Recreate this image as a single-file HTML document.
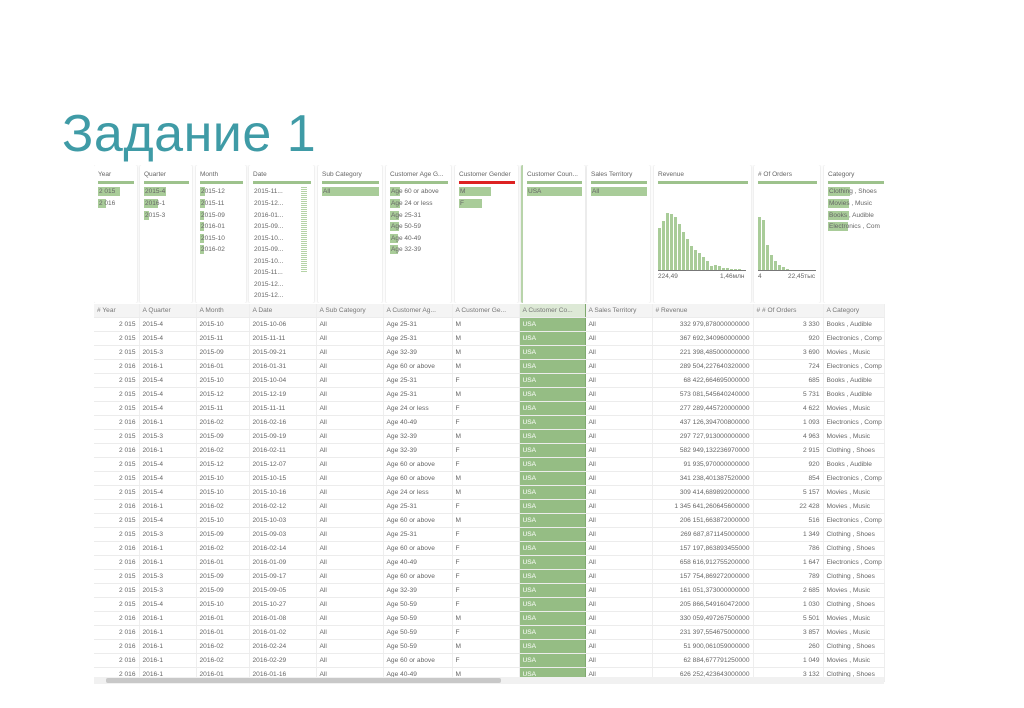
<!DOCTYPE html>
<html><head><meta charset="utf-8">
<style>
body{margin:0;width:1024px;height:708px;background:#fff;position:relative;overflow:hidden;font-family:"Liberation Sans",sans-serif;color:#666}
h1{position:absolute;left:62px;top:104px;margin:0;font-weight:normal;font-size:52px;color:#3f9ba6;font-family:"Liberation Sans","DejaVu Sans",sans-serif;letter-spacing:0.5px}
.cards{position:absolute;left:94px;top:165px;height:138px;width:790px;overflow:hidden}
.card{position:absolute;top:0;height:138px;background:#fff;box-shadow:0 0 2px rgba(0,0,0,.18);border-radius:2px;font-size:6.5px;overflow:hidden}
.card .t{position:absolute;left:4px;top:6px;white-space:nowrap}
.card .b{position:absolute;left:4px;right:3px;top:16px;height:3px;background:#9dc28c}
.card .v{position:absolute;left:4px;white-space:nowrap;height:9px;line-height:9px;font-size:6.5px}
.card .v i{position:absolute;left:0;top:0;height:9px;background:#a9cc99;z-index:0}
.card .v span{position:relative;z-index:1;padding-left:1px}
table{position:absolute;left:94px;top:304px;border-collapse:collapse;table-layout:fixed;width:790px;font-size:6.6px}
td{height:13px;padding:0 3px;border-bottom:1px solid #ececec;border-right:1px solid #eee;white-space:nowrap;overflow:hidden}
tr.h td{height:13px;background:#f4f4f4;color:#777}
td.r{text-align:right}
td.g{background:#95bd84;color:#fff;border-right:1px solid #7fa86f}
tr.h td.g{background:#dde9d6;color:#777}
.sb{position:absolute;left:94px;top:677px;width:790px;height:7px;background:#f1f1f1}
.sb i{position:absolute;left:12px;top:1px;width:395px;height:5px;background:#c8c8c8;border-radius:2px}
</style></head><body>
<h1>Задание 1</h1>
<div class="cards">
<div class="card" style="left:0;width:43px"><div class="t">Year</div><div class="b"></div>
<div class="v" style="top:22px"><i style="width:22px"></i><span>2 015</span></div>
<div class="v" style="top:34px"><i style="width:8px"></i><span>2 016</span></div></div>
<div class="card" style="left:46px;width:52px"><div class="t">Quarter</div><div class="b"></div>
<div class="v" style="top:22px"><i style="width:22px"></i><span>2015-4</span></div>
<div class="v" style="top:34px"><i style="width:14px"></i><span>2016-1</span></div>
<div class="v" style="top:46px"><i style="width:5px"></i><span>2015-3</span></div></div>
<div class="card" style="left:102px;width:50px"><div class="t">Month</div><div class="b"></div>
<div class="v" style="top:22px"><i style="width:5px"></i><span>2015-12</span></div>
<div class="v" style="top:34px"><i style="width:5px"></i><span>2015-11</span></div>
<div class="v" style="top:46px"><i style="width:4px"></i><span>2015-09</span></div>
<div class="v" style="top:57px"><i style="width:4px"></i><span>2016-01</span></div>
<div class="v" style="top:69px"><i style="width:4px"></i><span>2015-10</span></div>
<div class="v" style="top:80px"><i style="width:4px"></i><span>2016-02</span></div></div>
<div class="card" style="left:155px;width:65px"><div class="t">Date</div><div class="b"></div>
<div style="position:absolute;left:52px;top:22px;width:6px;height:85px;background:repeating-linear-gradient(#b5d3a6 0 1px,#fff 1px 2px)"></div>
<div class="v" style="top:22px"><span>2015-11...</span></div>
<div class="v" style="top:34px"><span>2015-12...</span></div>
<div class="v" style="top:46px"><span>2016-01...</span></div>
<div class="v" style="top:57px"><span>2015-09...</span></div>
<div class="v" style="top:69px"><span>2015-10...</span></div>
<div class="v" style="top:80px"><span>2015-09...</span></div>
<div class="v" style="top:92px"><span>2015-10...</span></div>
<div class="v" style="top:103px"><span>2015-11...</span></div>
<div class="v" style="top:115px"><span>2015-12...</span></div>
<div class="v" style="top:126px"><span>2015-12...</span></div></div>
<div class="card" style="left:224px;width:64px"><div class="t">Sub Category</div><div class="b"></div>
<div class="v" style="top:22px;right:3px"><i style="width:100%"></i><span>All</span></div></div>
<div class="card" style="left:292px;width:65px"><div class="t">Customer Age G...</div><div class="b"></div>
<div class="v" style="top:22px"><i style="width:10px"></i><span>Age 60 or above</span></div>
<div class="v" style="top:34px"><i style="width:10px"></i><span>Age 24 or less</span></div>
<div class="v" style="top:46px"><i style="width:9px"></i><span>Age 25-31</span></div>
<div class="v" style="top:57px"><i style="width:9px"></i><span>Age 50-59</span></div>
<div class="v" style="top:69px"><i style="width:8px"></i><span>Age 40-49</span></div>
<div class="v" style="top:80px"><i style="width:8px"></i><span>Age 32-39</span></div></div>
<div class="card" style="left:361px;width:63px"><div class="t">Customer Gender</div><div class="b" style="background:#d22"></div>
<div class="v" style="top:22px"><i style="width:32px"></i><span>M</span></div>
<div class="v" style="top:34px"><i style="width:23px"></i><span>F</span></div></div>
<div class="card" style="left:427px;width:62px;border-left:2px solid #b8d4aa"><div class="t">Customer Coun...</div><div class="b"></div>
<div class="v" style="top:22px;right:3px"><i style="width:100%"></i><span>USA</span></div></div>
<div class="card" style="left:493px;width:63px"><div class="t">Sales Territory</div><div class="b"></div>
<div class="v" style="top:22px;right:3px"><i style="width:100%"></i><span>All</span></div></div>
<div class="card" style="left:560px;width:97px"><div class="t">Revenue</div><div class="b"></div>
<svg style="position:absolute;left:3px;top:40px" width="92" height="66"><g fill="#a9cc99">
<rect x="1" y="23" width="3" height="43"/><rect x="5" y="16" width="3" height="50"/><rect x="9" y="8" width="3" height="58"/><rect x="13" y="9" width="3" height="57"/><rect x="17" y="12" width="3" height="54"/><rect x="21" y="19" width="3" height="47"/><rect x="25" y="27" width="3" height="39"/><rect x="29" y="34" width="3" height="32"/><rect x="33" y="41" width="3" height="25"/><rect x="37" y="45" width="3" height="21"/><rect x="41" y="48" width="3" height="18"/><rect x="45" y="52" width="3" height="14"/><rect x="49" y="56" width="3" height="10"/><rect x="53" y="61" width="3" height="5"/><rect x="57" y="60" width="3" height="6"/><rect x="61" y="61" width="3" height="5"/><rect x="65" y="63" width="3" height="3"/><rect x="69" y="63" width="3" height="3"/><rect x="73" y="64" width="3" height="2"/><rect x="77" y="64" width="3" height="2"/><rect x="81" y="64" width="3" height="2"/><rect x="85" y="65" width="3" height="1"/></g>
<rect x="1" y="65" width="88" height="1" fill="#777"/></svg>
<div class="v" style="top:107px">224,49</div><div class="v" style="top:107px;left:66px">1,46млн</div></div>
<div class="card" style="left:660px;width:66px"><div class="t"># Of Orders</div><div class="b"></div>
<svg style="position:absolute;left:3px;top:40px" width="60" height="66"><g fill="#a9cc99">
<rect x="1" y="12" width="3" height="54"/><rect x="5" y="15" width="3" height="51"/><rect x="9" y="40" width="3" height="26"/><rect x="13" y="50" width="3" height="16"/><rect x="17" y="56" width="3" height="10"/><rect x="21" y="60" width="3" height="6"/><rect x="25" y="62" width="3" height="4"/><rect x="29" y="64" width="3" height="2"/><rect x="33" y="65" width="3" height="1"/></g>
<rect x="1" y="65" width="58" height="1" fill="#777"/></svg>
<div class="v" style="top:107px">4</div><div class="v" style="top:107px;left:34px">22,45тыс</div></div>
<div class="card" style="left:730px;width:66px"><div class="t">Category</div><div class="b"></div>
<div class="v" style="top:22px"><i style="width:22px"></i><span>Clothing , Shoes</span></div>
<div class="v" style="top:34px"><i style="width:21px"></i><span>Movies , Music</span></div>
<div class="v" style="top:46px"><i style="width:21px"></i><span>Books , Audible</span></div>
<div class="v" style="top:57px"><i style="width:20px"></i><span>Electronics , Com</span></div></div>
</div>
<table>
<colgroup><col style="width:45px"><col style="width:57px"><col style="width:53px"><col style="width:67px"><col style="width:67px"><col style="width:69px"><col style="width:67px"><col style="width:66px"><col style="width:67px"><col style="width:101px"><col style="width:70px"><col style="width:61px"></colgroup>
<tr class="h"><td># Year</td><td>A Quarter</td><td>A Month</td><td>A Date</td><td>A Sub Category</td><td>A Customer Ag...</td><td>A Customer Ge...</td><td class="g">A Customer Co...</td><td>A Sales Territory</td><td># Revenue</td><td># # Of Orders</td><td>A Category</td></tr>
<tr><td class="r">2 015</td><td>2015-4</td><td>2015-10</td><td>2015-10-06</td><td>All</td><td>Age 25-31</td><td>M</td><td class="g">USA</td><td>All</td><td class="r">332 979,878000000000</td><td class="r">3 330</td><td>Books , Audible</td></tr>
<tr><td class="r">2 015</td><td>2015-4</td><td>2015-11</td><td>2015-11-11</td><td>All</td><td>Age 25-31</td><td>M</td><td class="g">USA</td><td>All</td><td class="r">367 692,340960000000</td><td class="r">920</td><td>Electronics , Comp</td></tr>
<tr><td class="r">2 015</td><td>2015-3</td><td>2015-09</td><td>2015-09-21</td><td>All</td><td>Age 32-39</td><td>M</td><td class="g">USA</td><td>All</td><td class="r">221 398,485000000000</td><td class="r">3 690</td><td>Movies , Music</td></tr>
<tr><td class="r">2 016</td><td>2016-1</td><td>2016-01</td><td>2016-01-31</td><td>All</td><td>Age 60 or above</td><td>M</td><td class="g">USA</td><td>All</td><td class="r">289 504,227640320000</td><td class="r">724</td><td>Electronics , Comp</td></tr>
<tr><td class="r">2 015</td><td>2015-4</td><td>2015-10</td><td>2015-10-04</td><td>All</td><td>Age 25-31</td><td>F</td><td class="g">USA</td><td>All</td><td class="r">68 422,664695000000</td><td class="r">685</td><td>Books , Audible</td></tr>
<tr><td class="r">2 015</td><td>2015-4</td><td>2015-12</td><td>2015-12-19</td><td>All</td><td>Age 25-31</td><td>M</td><td class="g">USA</td><td>All</td><td class="r">573 081,545640240000</td><td class="r">5 731</td><td>Books , Audible</td></tr>
<tr><td class="r">2 015</td><td>2015-4</td><td>2015-11</td><td>2015-11-11</td><td>All</td><td>Age 24 or less</td><td>F</td><td class="g">USA</td><td>All</td><td class="r">277 289,445720000000</td><td class="r">4 622</td><td>Movies , Music</td></tr>
<tr><td class="r">2 016</td><td>2016-1</td><td>2016-02</td><td>2016-02-16</td><td>All</td><td>Age 40-49</td><td>F</td><td class="g">USA</td><td>All</td><td class="r">437 126,394700800000</td><td class="r">1 093</td><td>Electronics , Comp</td></tr>
<tr><td class="r">2 015</td><td>2015-3</td><td>2015-09</td><td>2015-09-19</td><td>All</td><td>Age 32-39</td><td>M</td><td class="g">USA</td><td>All</td><td class="r">297 727,913000000000</td><td class="r">4 963</td><td>Movies , Music</td></tr>
<tr><td class="r">2 016</td><td>2016-1</td><td>2016-02</td><td>2016-02-11</td><td>All</td><td>Age 32-39</td><td>F</td><td class="g">USA</td><td>All</td><td class="r">582 949,132236970000</td><td class="r">2 915</td><td>Clothing , Shoes</td></tr>
<tr><td class="r">2 015</td><td>2015-4</td><td>2015-12</td><td>2015-12-07</td><td>All</td><td>Age 60 or above</td><td>F</td><td class="g">USA</td><td>All</td><td class="r">91 935,970000000000</td><td class="r">920</td><td>Books , Audible</td></tr>
<tr><td class="r">2 015</td><td>2015-4</td><td>2015-10</td><td>2015-10-15</td><td>All</td><td>Age 60 or above</td><td>M</td><td class="g">USA</td><td>All</td><td class="r">341 238,401387520000</td><td class="r">854</td><td>Electronics , Comp</td></tr>
<tr><td class="r">2 015</td><td>2015-4</td><td>2015-10</td><td>2015-10-16</td><td>All</td><td>Age 24 or less</td><td>M</td><td class="g">USA</td><td>All</td><td class="r">309 414,689892000000</td><td class="r">5 157</td><td>Movies , Music</td></tr>
<tr><td class="r">2 016</td><td>2016-1</td><td>2016-02</td><td>2016-02-12</td><td>All</td><td>Age 25-31</td><td>F</td><td class="g">USA</td><td>All</td><td class="r">1 345 641,260645600000</td><td class="r">22 428</td><td>Movies , Music</td></tr>
<tr><td class="r">2 015</td><td>2015-4</td><td>2015-10</td><td>2015-10-03</td><td>All</td><td>Age 60 or above</td><td>M</td><td class="g">USA</td><td>All</td><td class="r">206 151,663872000000</td><td class="r">516</td><td>Electronics , Comp</td></tr>
<tr><td class="r">2 015</td><td>2015-3</td><td>2015-09</td><td>2015-09-03</td><td>All</td><td>Age 25-31</td><td>F</td><td class="g">USA</td><td>All</td><td class="r">269 687,871145000000</td><td class="r">1 349</td><td>Clothing , Shoes</td></tr>
<tr><td class="r">2 016</td><td>2016-1</td><td>2016-02</td><td>2016-02-14</td><td>All</td><td>Age 60 or above</td><td>F</td><td class="g">USA</td><td>All</td><td class="r">157 197,863893455000</td><td class="r">786</td><td>Clothing , Shoes</td></tr>
<tr><td class="r">2 016</td><td>2016-1</td><td>2016-01</td><td>2016-01-09</td><td>All</td><td>Age 40-49</td><td>F</td><td class="g">USA</td><td>All</td><td class="r">658 616,912755200000</td><td class="r">1 647</td><td>Electronics , Comp</td></tr>
<tr><td class="r">2 015</td><td>2015-3</td><td>2015-09</td><td>2015-09-17</td><td>All</td><td>Age 60 or above</td><td>F</td><td class="g">USA</td><td>All</td><td class="r">157 754,869272000000</td><td class="r">789</td><td>Clothing , Shoes</td></tr>
<tr><td class="r">2 015</td><td>2015-3</td><td>2015-09</td><td>2015-09-05</td><td>All</td><td>Age 32-39</td><td>F</td><td class="g">USA</td><td>All</td><td class="r">161 051,373000000000</td><td class="r">2 685</td><td>Movies , Music</td></tr>
<tr><td class="r">2 015</td><td>2015-4</td><td>2015-10</td><td>2015-10-27</td><td>All</td><td>Age 50-59</td><td>F</td><td class="g">USA</td><td>All</td><td class="r">205 866,549160472000</td><td class="r">1 030</td><td>Clothing , Shoes</td></tr>
<tr><td class="r">2 016</td><td>2016-1</td><td>2016-01</td><td>2016-01-08</td><td>All</td><td>Age 50-59</td><td>M</td><td class="g">USA</td><td>All</td><td class="r">330 059,497267500000</td><td class="r">5 501</td><td>Movies , Music</td></tr>
<tr><td class="r">2 016</td><td>2016-1</td><td>2016-01</td><td>2016-01-02</td><td>All</td><td>Age 50-59</td><td>F</td><td class="g">USA</td><td>All</td><td class="r">231 397,554675000000</td><td class="r">3 857</td><td>Movies , Music</td></tr>
<tr><td class="r">2 016</td><td>2016-1</td><td>2016-02</td><td>2016-02-24</td><td>All</td><td>Age 50-59</td><td>M</td><td class="g">USA</td><td>All</td><td class="r">51 900,061059000000</td><td class="r">260</td><td>Clothing , Shoes</td></tr>
<tr><td class="r">2 016</td><td>2016-1</td><td>2016-02</td><td>2016-02-29</td><td>All</td><td>Age 60 or above</td><td>F</td><td class="g">USA</td><td>All</td><td class="r">62 884,677791250000</td><td class="r">1 049</td><td>Movies , Music</td></tr>
<tr><td class="r">2 016</td><td>2016-1</td><td>2016-01</td><td>2016-01-16</td><td>All</td><td>Age 40-49</td><td>M</td><td class="g">USA</td><td>All</td><td class="r">626 252,423643000000</td><td class="r">3 132</td><td>Clothing , Shoes</td></tr>
</table>
<div class="sb"><i></i></div>
</body></html>
